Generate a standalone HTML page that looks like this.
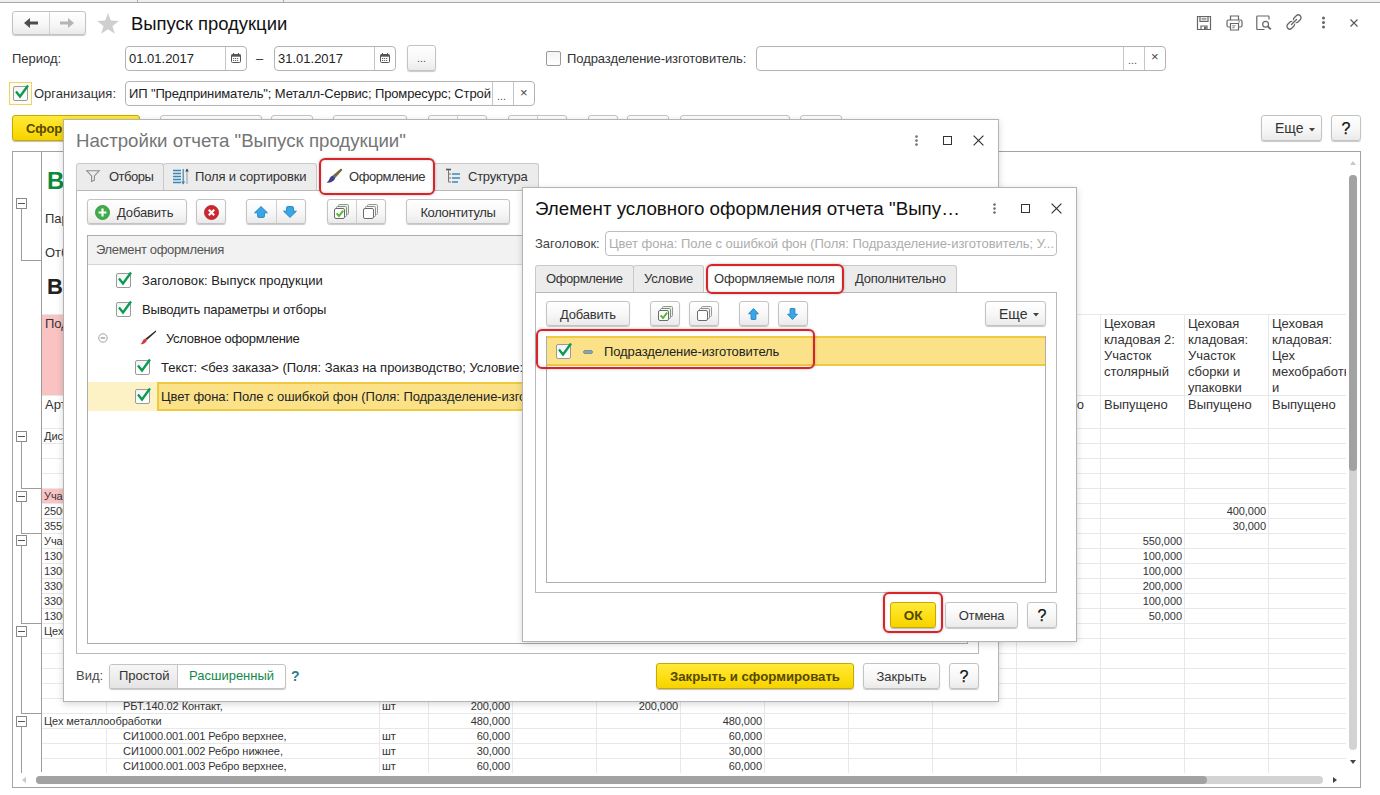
<!DOCTYPE html>
<html lang="ru">
<head>
<meta charset="utf-8">
<title>Выпуск продукции</title>
<style>
*{box-sizing:border-box}
html,body{margin:0;padding:0}
body{width:1380px;height:795px;position:relative;overflow:hidden;background:#fff;font-family:"Liberation Sans",sans-serif;font-size:13px;color:#333}
.a{position:absolute}
.t{position:absolute;white-space:nowrap;line-height:16px}
.btn{position:absolute;border:1px solid #c3c3c3;border-radius:3px;background:linear-gradient(#ffffff,#f6f6f6 60%,#eaeaea);box-shadow:0 1px 1px rgba(0,0,0,.22);text-align:center;white-space:nowrap;color:#333}
.ybtn{position:absolute;border:1px solid #c8a900;border-radius:3px;background:linear-gradient(#ffea3a,#fcdd10 60%,#f5d300);box-shadow:0 1px 1px rgba(0,0,0,.25);text-align:center;white-space:nowrap;color:#554800}
.inp{position:absolute;border:1px solid #b4b4b4;border-radius:4px;background:#fff}
.cb{position:absolute;width:15px;height:15px;border:1px solid #9a9a9a;border-radius:2px;background:linear-gradient(#f4f4f4,#fff)}
.hl{position:absolute;height:1px;background:#d9d9d9}
.vl{position:absolute;width:1px;background:#d9d9d9}
.s{position:absolute;white-space:nowrap;font-size:11px;line-height:15px;color:#333;letter-spacing:-.06px}
.r{text-align:right}
.tab{position:absolute;border:1px solid #c9c9c9;border-bottom:none;border-radius:3px 3px 0 0;background:#ececec;white-space:nowrap}
.red{position:absolute;border:2px solid #d8232a;border-radius:6px;box-shadow:0 0 3px rgba(0,0,0,.28),inset 0 0 3px rgba(0,0,0,.18)}
svg{position:absolute;overflow:visible}
</style>
</head>
<body>
<!-- ===== main window ===== -->
<div id="main">
<div class="a" style="left:0;top:0;width:1380px;height:2px;background:#efefef"></div>
<div class="a" style="left:0;top:2px;width:1380px;height:1px;background:#a8a8a8"></div>
<div class="a" style="left:137px;top:0;width:1px;height:2px;background:#aaa"></div>
<div class="a" style="left:283px;top:0;width:1px;height:2px;background:#aaa"></div>

<!-- nav buttons -->
<div class="btn" style="left:12px;top:11px;width:74px;height:24px"></div>
<div class="a" style="left:49px;top:12px;width:1px;height:22px;background:#d0d0d0"></div>
<svg style="left:23px;top:17px" width="16" height="12" viewBox="0 0 16 12"><path d="M1 6 L7 1 L7 4.6 L15 4.6 L15 7.4 L7 7.4 L7 11 Z" fill="#4d4d4d"/></svg>
<svg style="left:59px;top:17px" width="16" height="12" viewBox="0 0 16 12"><path d="M15 6 L9 1 L9 4.6 L1 4.6 L1 7.4 L9 7.4 L9 11 Z" fill="#b5b5b5"/></svg>
<svg style="left:96px;top:12px" width="24" height="23" viewBox="0 0 24 23"><path d="M12 1 L14.8 8.6 L23 8.9 L16.5 13.9 L18.8 21.8 L12 17.2 L5.2 21.8 L7.5 13.9 L1 8.9 L9.2 8.6 Z" fill="#cfcfcf"/></svg>
<div class="t" style="left:131px;top:13px;font-size:18.45px;line-height:22px;color:#111">Выпуск продукции</div>

<!-- top-right icons -->
<svg style="left:1196px;top:15px" width="16" height="16" viewBox="0 0 16 16" fill="none" stroke="#666" stroke-width="1.2"><path d="M1.5 1.5 H14.5 V14.5 H1.5 Z"/><path d="M4 1.5 V6.5 H12 V1.5"/><path d="M5.5 3.3 H10.5 M5.5 4.9 H10.5" stroke-width=".8"/><path d="M5 14.5 V11 H11 V14.5"/><rect x="8" y="11.6" width="2.4" height="2.6" fill="#666" stroke="none"/></svg>
<svg style="left:1226px;top:15px" width="17" height="16" viewBox="0 0 17 16" fill="none" stroke="#666" stroke-width="1.2"><path d="M4.5 5 V1 H12.5 V5"/><path d="M4 12 H2.5 Q1 12 1 10.5 V6.5 Q1 5 2.5 5 H14.5 Q16 5 16 6.5 V10.5 Q16 12 14.5 12 H13"/><path d="M4.5 8.5 H12.5 V15 H4.5 Z" fill="#fff"/><path d="M6.3 10.8 H9.5 M6.3 12.7 H8.5" stroke-width=".9"/><path d="M12.2 6.9 H14" stroke-width=".9"/></svg>
<svg style="left:1256px;top:15px" width="16" height="16" viewBox="0 0 16 16" fill="none" stroke="#666" stroke-width="1.2"><path d="M8.5 14.5 H1.5 Q.8 14.5 .8 13.8 V1.7 Q.8 1 1.5 1 H12.3 Q13 1 13 1.7 V4.5"/><circle cx="9.6" cy="9.2" r="2.9"/><path d="M11.8 11.4 L14.8 14.4" stroke-width="1.8"/></svg>
<svg style="left:1286px;top:14px" width="16" height="16" viewBox="0 0 16 16" fill="none" stroke="#666" stroke-width="1.3"><g transform="translate(8 8) rotate(-45)"><rect x=".4" y="-2.8" width="8.4" height="5.6" rx="2.8"/><rect x="-8.8" y="-2.8" width="8.4" height="5.6" rx="2.8"/><path d="M-3.4 0 H3.4" stroke="#fff" stroke-width="3.2"/><path d="M-3.6 0 H3.6" stroke-linecap="round"/></g></svg>
<svg style="left:1321px;top:16px" width="5" height="13" viewBox="0 0 5 13"><circle cx="2.5" cy="2" r="1.5" fill="#666"/><circle cx="2.5" cy="6.5" r="1.5" fill="#666"/><circle cx="2.5" cy="11" r="1.5" fill="#666"/></svg>
<svg style="left:1350px;top:19px" width="8" height="8" viewBox="0 0 8 8"><path d="M.5 .5 L7.5 7.5 M7.5 .5 L.5 7.5" stroke="#555" stroke-width="1.1"/></svg>

<!-- period row -->
<div class="t" style="left:12px;top:51px">Период:</div>
<div class="inp" style="left:125px;top:46px;width:122px;height:25px"></div>
<div class="a" style="left:225px;top:47px;width:1px;height:23px;background:#c6c6c6"></div>
<div class="t" style="left:129px;top:51px;color:#222">01.01.2017</div>
<svg class="cal" style="left:231px;top:53px" width="10" height="10" viewBox="0 0 10 10"><rect x=".5" y="1.5" width="9" height="8" rx="1" fill="#fff" stroke="#555"/><rect x=".5" y="1.5" width="9" height="2.2" fill="#555"/><path d="M2.5 0 V2 M7.5 0 V2" stroke="#555"/><path d="M2 5.5 H8 M2 7.5 H8" stroke="#555" stroke-width=".9" stroke-dasharray="1.2 .8"/></svg>
<div class="t" style="left:256px;top:51px">–</div>
<div class="inp" style="left:274px;top:46px;width:122px;height:25px"></div>
<div class="a" style="left:374px;top:47px;width:1px;height:23px;background:#c6c6c6"></div>
<div class="t" style="left:278px;top:51px;color:#222">31.01.2017</div>
<svg class="cal" style="left:380px;top:53px" width="10" height="10" viewBox="0 0 10 10"><rect x=".5" y="1.5" width="9" height="8" rx="1" fill="#fff" stroke="#555"/><rect x=".5" y="1.5" width="9" height="2.2" fill="#555"/><path d="M2.5 0 V2 M7.5 0 V2" stroke="#555"/><path d="M2 5.5 H8 M2 7.5 H8" stroke="#555" stroke-width=".9" stroke-dasharray="1.2 .8"/></svg>
<div class="btn" style="left:407px;top:45px;width:29px;height:26px;line-height:25px;font-size:11px;color:#555">...</div>

<div class="cb" style="left:546px;top:51px"></div>
<div class="t" style="left:567px;top:51px;letter-spacing:-.08px">Подразделение-изготовитель:</div>
<div class="inp" style="left:756px;top:46px;width:410px;height:25px"></div>
<div class="a" style="left:1123px;top:47px;width:1px;height:23px;background:#c6c6c6"></div>
<div class="a" style="left:1144px;top:47px;width:1px;height:23px;background:#c6c6c6"></div>
<div class="t" style="left:1128px;top:52px;font-size:11px;color:#555">...</div>
<div class="t" style="left:1151px;top:49px;font-size:13px;color:#444">×</div>

<!-- organization row -->
<div class="a" style="left:9px;top:82px;width:23px;height:23px;border:1px solid #e9d46a;background:#fffdf0"></div>
<div class="cb" style="left:13px;top:86px"></div>
<svg style="left:14px;top:84px" width="16" height="15" viewBox="0 0 16 15"><path d="M2 7.5 L6 12.5 L14 1.5" fill="none" stroke="#0a9a52" stroke-width="2.3"/></svg>
<div class="t" style="left:34px;top:86px">Организация:</div>
<div class="inp" style="left:125px;top:81px;width:410px;height:25px"></div>
<div class="a" style="left:492px;top:82px;width:1px;height:23px;background:#c6c6c6"></div>
<div class="a" style="left:513px;top:82px;width:1px;height:23px;background:#c6c6c6"></div>
<div class="t" style="left:129px;top:86px;color:#222;width:362px;overflow:hidden;letter-spacing:-.13px">ИП "Предприниматель"; Металл-Сервис; Промресурс; Стройснаб</div>
<div class="t" style="left:497px;top:88px;font-size:11px;color:#555">...</div>
<div class="t" style="left:520px;top:85px;font-size:13px;color:#444">×</div>

<!-- command bar -->
<div class="ybtn" style="left:12px;top:115px;width:128px;height:26px;line-height:25px;font-weight:bold;text-align:left;padding-left:13px">Сформировать</div>
<div class="btn" style="left:160px;top:115px;width:102px;height:26px"></div>
<div class="btn" style="left:271px;top:115px;width:42px;height:26px"></div>
<div class="btn" style="left:333px;top:115px;width:74px;height:26px"></div>
<div class="btn" style="left:428px;top:115px;width:59px;height:26px"></div>
<div class="a" style="left:457px;top:116px;width:1px;height:24px;background:#d0d0d0"></div>
<div class="btn" style="left:508px;top:115px;width:59px;height:26px"></div>
<div class="a" style="left:537px;top:116px;width:1px;height:24px;background:#d0d0d0"></div>
<div class="btn" style="left:588px;top:115px;width:30px;height:26px"></div>
<div class="btn" style="left:627px;top:115px;width:42px;height:26px"></div>
<div class="btn" style="left:680px;top:115px;width:110px;height:26px"></div>
<div class="btn" style="left:800px;top:115px;width:42px;height:26px"></div>
<div class="btn" style="left:1261px;top:115px;width:61px;height:26px;line-height:25px;font-size:14px;text-align:left;padding-left:13px">Еще</div>
<svg style="left:1309px;top:128px" width="6" height="4" viewBox="0 0 6 4"><path d="M0 0 H6 L3 3.6 Z" fill="#444"/></svg>
<div class="btn" style="left:1331px;top:115px;width:30px;height:26px;line-height:25px;font-size:16px;color:#111;-webkit-text-stroke:.25px #111">?</div>
<!-- ===== spreadsheet ===== -->
<div class="a" style="left:12px;top:151px;width:1349px;height:637px;border:1px solid #a3a3a3;background:#fff"></div>
<div class="a" id="sheet" style="left:13px;top:152px;width:1333px;height:621px;overflow:hidden">
<div class="a" style="left:29px;top:163px;width:65px;height:80px;background:#f9c3c3"></div>
<div class="a" style="left:29px;top:336px;width:65px;height:15px;background:#f9c3c3"></div>
<div class="hl" style="left:29px;top:162px;width:1305px;background:#e8e8e8"></div>
<div class="hl" style="left:29px;top:243px;width:1305px;background:#e8e8e8"></div>
<div class="hl" style="left:29px;top:276px;width:1305px;background:#e8e8e8"></div>
<div class="hl" style="left:29px;top:291px;width:1305px;background:#e8e8e8"></div>
<div class="hl" style="left:29px;top:306px;width:1305px;background:#e8e8e8"></div>
<div class="hl" style="left:29px;top:321px;width:1305px;background:#e8e8e8"></div>
<div class="hl" style="left:29px;top:336px;width:1305px;background:#e8e8e8"></div>
<div class="hl" style="left:29px;top:351px;width:1305px;background:#e8e8e8"></div>
<div class="hl" style="left:29px;top:366px;width:1305px;background:#e8e8e8"></div>
<div class="hl" style="left:29px;top:381px;width:1305px;background:#e8e8e8"></div>
<div class="hl" style="left:29px;top:396px;width:1305px;background:#e8e8e8"></div>
<div class="hl" style="left:29px;top:411px;width:1305px;background:#e8e8e8"></div>
<div class="hl" style="left:29px;top:426px;width:1305px;background:#e8e8e8"></div>
<div class="hl" style="left:29px;top:441px;width:1305px;background:#e8e8e8"></div>
<div class="hl" style="left:29px;top:456px;width:1305px;background:#e8e8e8"></div>
<div class="hl" style="left:29px;top:471px;width:1305px;background:#e8e8e8"></div>
<div class="hl" style="left:29px;top:486px;width:1305px;background:#e8e8e8"></div>
<div class="hl" style="left:29px;top:501px;width:1305px;background:#e8e8e8"></div>
<div class="hl" style="left:29px;top:516px;width:1305px;background:#e8e8e8"></div>
<div class="hl" style="left:29px;top:531px;width:1305px;background:#e8e8e8"></div>
<div class="hl" style="left:29px;top:546px;width:1305px;background:#e8e8e8"></div>
<div class="hl" style="left:29px;top:561px;width:1305px;background:#e8e8e8"></div>
<div class="hl" style="left:29px;top:576px;width:1305px;background:#e8e8e8"></div>
<div class="hl" style="left:29px;top:591px;width:1305px;background:#e8e8e8"></div>
<div class="hl" style="left:29px;top:606px;width:1305px;background:#e8e8e8"></div>
<div class="hl" style="left:29px;top:621px;width:1305px;background:#e8e8e8"></div>
<div class="vl" style="left:93px;top:163px;height:460px;background:#e8e8e8"></div>
<div class="vl" style="left:366px;top:163px;height:460px;background:#e8e8e8"></div>
<div class="vl" style="left:415px;top:163px;height:460px;background:#e8e8e8"></div>
<div class="vl" style="left:499px;top:163px;height:460px;background:#e8e8e8"></div>
<div class="vl" style="left:583px;top:163px;height:460px;background:#e8e8e8"></div>
<div class="vl" style="left:667px;top:163px;height:460px;background:#e8e8e8"></div>
<div class="vl" style="left:751px;top:163px;height:460px;background:#e8e8e8"></div>
<div class="vl" style="left:835px;top:163px;height:460px;background:#e8e8e8"></div>
<div class="vl" style="left:919px;top:163px;height:460px;background:#e8e8e8"></div>
<div class="vl" style="left:1003px;top:163px;height:460px;background:#e8e8e8"></div>
<div class="vl" style="left:1087px;top:163px;height:460px;background:#e8e8e8"></div>
<div class="vl" style="left:1171px;top:163px;height:460px;background:#e8e8e8"></div>
<div class="vl" style="left:1255px;top:163px;height:460px;background:#e8e8e8"></div>
<div class="vl" style="left:28px;top:0;height:620px;background:#9c9c9c"></div>
<div class="vl" style="left:8px;top:57px;height:51px;background:#9c9c9c"></div>
<div class="hl" style="left:8px;top:108px;width:20px;background:#9c9c9c"></div>
<div class="a" style="left:3px;top:46px;width:11px;height:11px;border:1px solid #8a8a8a;background:#fff"></div>
<div class="a" style="left:5px;top:51px;width:7px;height:1px;background:#555"></div>
<div class="vl" style="left:8px;top:290px;height:46px;background:#9c9c9c"></div>
<div class="hl" style="left:8px;top:336px;width:20px;background:#9c9c9c"></div>
<div class="a" style="left:3px;top:279px;width:11px;height:11px;border:1px solid #8a8a8a;background:#fff"></div>
<div class="a" style="left:5px;top:284px;width:7px;height:1px;background:#555"></div>
<div class="vl" style="left:8px;top:350px;height:31px;background:#9c9c9c"></div>
<div class="hl" style="left:8px;top:381px;width:20px;background:#9c9c9c"></div>
<div class="a" style="left:3px;top:339px;width:11px;height:11px;border:1px solid #8a8a8a;background:#fff"></div>
<div class="a" style="left:5px;top:344px;width:7px;height:1px;background:#555"></div>
<div class="vl" style="left:8px;top:394px;height:77px;background:#9c9c9c"></div>
<div class="hl" style="left:8px;top:471px;width:20px;background:#9c9c9c"></div>
<div class="a" style="left:3px;top:383px;width:11px;height:11px;border:1px solid #8a8a8a;background:#fff"></div>
<div class="a" style="left:5px;top:388px;width:7px;height:1px;background:#555"></div>
<div class="vl" style="left:8px;top:485px;height:76px;background:#9c9c9c"></div>
<div class="hl" style="left:8px;top:561px;width:20px;background:#9c9c9c"></div>
<div class="a" style="left:3px;top:474px;width:11px;height:11px;border:1px solid #8a8a8a;background:#fff"></div>
<div class="a" style="left:5px;top:479px;width:7px;height:1px;background:#555"></div>
<div class="vl" style="left:8px;top:575px;height:53px;background:#9c9c9c"></div>
<div class="a" style="left:3px;top:564px;width:11px;height:11px;border:1px solid #8a8a8a;background:#fff"></div>
<div class="a" style="left:5px;top:569px;width:7px;height:1px;background:#555"></div>
<div class="t" style="left:34px;top:14px;font-size:24px;line-height:30px;font-weight:bold;color:#0c8a3e">Выпуск продукции</div>
<div class="t" style="left:32px;top:59px">Параметры:</div>
<div class="t" style="left:32px;top:93px">Отбор:</div>
<div class="t" style="left:34px;top:122px;font-size:22px;line-height:26px;font-weight:bold;color:#222">Выпуск</div>
<div class="t" style="left:32px;top:164px">Подразделение</div>
<div class="t" style="left:32px;top:245px">Артикул</div>
<div class="t" style="left:1091px;top:164px;width:80px;height:79px;overflow:hidden">Цеховая<br>кладовая 2:<br>Участок<br>столярный</div>
<div class="t" style="left:1091px;top:245px">Выпущено</div>
<div class="t" style="left:1175px;top:164px;width:80px;height:79px;overflow:hidden">Цеховая<br>кладовая:<br>Участок<br>сборки и<br>упаковки</div>
<div class="t" style="left:1175px;top:245px">Выпущено</div>
<div class="t" style="left:1259px;top:164px;width:80px;height:79px;overflow:hidden">Цеховая<br>кладовая:<br>Цех<br>мехобработки<br>и</div>
<div class="t" style="left:1259px;top:245px">Выпущено</div>
<div class="t r" style="left:1007px;top:245px;width:64px">Выпущено</div>
<div class="s" style="left:31px;top:277px">Диспетчерская</div>
<div class="s" style="left:31px;top:337px">Участок</div>
<div class="s" style="left:31px;top:352px">2500</div>
<div class="s" style="left:31px;top:367px">3550</div>
<div class="s" style="left:31px;top:382px">Участок</div>
<div class="s" style="left:31px;top:397px">1300</div>
<div class="s" style="left:31px;top:412px">1300</div>
<div class="s" style="left:31px;top:427px">3300</div>
<div class="s" style="left:31px;top:442px">3300</div>
<div class="s" style="left:31px;top:457px">1300</div>
<div class="s" style="left:31px;top:472px">Цех</div>
<div class="s r" style="left:1183px;top:352px;width:70px">400,000</div>
<div class="s r" style="left:1183px;top:367px;width:70px">30,000</div>
<div class="s r" style="left:1099px;top:382px;width:70px">550,000</div>
<div class="s r" style="left:1099px;top:397px;width:70px">100,000</div>
<div class="s r" style="left:1099px;top:412px;width:70px">100,000</div>
<div class="s r" style="left:1099px;top:427px;width:70px">200,000</div>
<div class="s r" style="left:1099px;top:442px;width:70px">100,000</div>
<div class="s r" style="left:1099px;top:457px;width:70px">50,000</div>
<div class="s" style="left:110px;top:547px">РБТ.140.02 Контакт,</div>
<div class="s" style="left:369px;top:547px">шт</div>
<div class="s r" style="left:427px;top:547px;width:70px">200,000</div>
<div class="s r" style="left:595px;top:547px;width:70px">200,000</div>
<div class="a" style="left:93px;top:562px;width:1px;height:14px;background:#fff"></div>
<div class="s" style="left:31px;top:562px">Цех металлообработки</div>
<div class="s r" style="left:427px;top:562px;width:70px">480,000</div>
<div class="s r" style="left:679px;top:562px;width:70px">480,000</div>
<div class="s" style="left:110px;top:577px">СИ1000.001.001 Ребро верхнее,</div>
<div class="s" style="left:369px;top:577px">шт</div>
<div class="s r" style="left:427px;top:577px;width:70px">60,000</div>
<div class="s r" style="left:679px;top:577px;width:70px">60,000</div>
<div class="s" style="left:110px;top:592px">СИ1000.001.002 Ребро нижнее,</div>
<div class="s" style="left:369px;top:592px">шт</div>
<div class="s r" style="left:427px;top:592px;width:70px">30,000</div>
<div class="s r" style="left:679px;top:592px;width:70px">30,000</div>
<div class="s" style="left:110px;top:607px">СИ1000.001.003 Ребро верхнее,</div>
<div class="s" style="left:369px;top:607px">шт</div>
<div class="s r" style="left:427px;top:607px;width:70px">60,000</div>
<div class="s r" style="left:679px;top:607px;width:70px">60,000</div>
</div>
<div class="a" style="left:1349px;top:175px;width:8px;height:575px;border-radius:4px;background:#d3d3d3"></div>
<div class="a" style="left:1349px;top:175px;width:8px;height:296px;border-radius:4px;background:#a2a2a2"></div>
<svg style="left:1350px;top:161px" width="6" height="4" viewBox="0 0 6 4"><path d="M0 4 H6 L3 0 Z" fill="#c8c8c8"/></svg>
<svg style="left:1350px;top:760px" width="6" height="4" viewBox="0 0 6 4"><path d="M0 0 H6 L3 4 Z" fill="#444"/></svg>
<div class="a" style="left:36px;top:776px;width:1287px;height:8px;border-radius:4px;background:#d3d3d3"></div>
<div class="a" style="left:36px;top:776px;width:1171px;height:8px;border-radius:4px;background:#a2a2a2"></div>
<svg style="left:22px;top:777px" width="4" height="6" viewBox="0 0 4 6"><path d="M4 0 V6 L0 3 Z" fill="#c8c8c8"/></svg>
<svg style="left:1333px;top:777px" width="4" height="6" viewBox="0 0 4 6"><path d="M0 0 V6 L4 3 Z" fill="#444"/></svg>
<!-- ===== end spreadsheet ===== -->
</div>
<!-- ===== dialog 1 ===== -->
<div class="a" id="d1" style="left:63px;top:119px;width:936px;height:583px;background:#fff;border:1px solid #b4b4b4;box-shadow:0 2px 7px rgba(0,0,0,.16)"></div>
<div class="t" style="left:76px;top:130px;font-size:18.67px;line-height:22px;color:#757575">Настройки отчета "Выпуск продукции"</div>
<svg style="left:914px;top:135px" width="5" height="12" viewBox="0 0 5 12"><circle cx="2.5" cy="1.6" r="1.35" fill="#777"/><circle cx="2.5" cy="5.6" r="1.35" fill="#777"/><circle cx="2.5" cy="9.6" r="1.35" fill="#777"/></svg>
<div class="a" style="left:943px;top:136px;width:9px;height:9px;border:1.5px solid #333"></div>
<svg style="left:973px;top:135px" width="11" height="11" viewBox="0 0 11 11"><path d="M.6 .6 L10.4 10.4 M10.4 .6 L.6 10.4" stroke="#333" stroke-width="1.2"/></svg>

<!-- tabs -->
<div class="tab" style="left:76px;top:163px;width:88px;height:28px"></div>
<div class="tab" style="left:163px;top:163px;width:154px;height:28px"></div>
<div class="tab" style="left:432px;top:163px;width:107px;height:28px"></div>
<!-- panel -->
<div class="a" style="left:76px;top:190px;width:903px;height:464px;border:1px solid #b9b9b9;background:#fff"></div>
<!-- active tab -->
<div class="a" style="left:321px;top:160px;width:112px;height:31px;background:#fff"></div>
<div class="red" style="left:319px;top:158px;width:116px;height:37px"></div>
<svg style="left:86px;top:170px" width="14" height="12" viewBox="0 0 14 12" fill="none" stroke="#8a8a8a" stroke-width="1.1"><path d="M.8 .8 H13.2 L8.4 6 V10.2 L5.6 11.4 V6 Z"/></svg>
<div class="t" style="left:109px;top:169px;letter-spacing:-.5px">Отборы</div>
<svg style="left:172px;top:168px" width="17" height="17" viewBox="0 0 17 17" fill="none"><path d="M1 2.5 H9 M1 5.5 H9 M1 8.5 H9 M1 11.5 H9 M1 14.5 H9" stroke="#3b88b8" stroke-width="1.7"/><path d="M11.2 1 V16" stroke="#3b88b8" stroke-width="1.2"/><path d="M11.2 16.5 L9.2 13.5 H13.2 Z" fill="#3b88b8"/><path d="M15 1.5 V16" stroke="#444" stroke-width="1" stroke-dasharray="1 1"/><path d="M15 .5 L13.2 3.6 H16.8 Z" fill="#444"/></svg>
<div class="t" style="left:195px;top:169px;letter-spacing:-.14px">Поля и сортировки</div>
<svg style="left:326px;top:168px" width="17" height="16" viewBox="0 0 17 16"><path d="M14.6 .8 Q16.4 .4 16.2 2.2 L9.4 9.8 L6.8 7.4 Z" fill="#7a6b3c"/><path d="M6.8 7.4 L9.4 9.8 Q8.6 12.6 6 13.8 Q3.4 15 .6 14.6 Q2.8 13.2 3.4 11 Q4.2 8.2 6.8 7.4 Z" fill="#3f3f8f"/></svg>
<div class="t" style="left:349px;top:169px;letter-spacing:-.46px">Оформление</div>
<svg style="left:445px;top:168px" width="17" height="17" viewBox="0 0 17 17" fill="none"><path d="M1 1.5 H6" stroke="#555" stroke-width="1.6"/><path d="M3.5 2 V14 H6 M3.5 6 H6 M3.5 10 H6" stroke="#777" stroke-width="1"/><path d="M7 6 H15 M7 10 H15 M7 14 H13" stroke="#3b88b8" stroke-width="1.7"/></svg>
<div class="t" style="left:468px;top:169px;letter-spacing:-.25px">Структура</div>

<!-- toolbar -->
<div class="btn" style="left:87px;top:199px;width:100px;height:25px"></div>
<svg style="left:95px;top:205px" width="15" height="15" viewBox="0 0 15 15"><circle cx="7.5" cy="7.5" r="7" fill="#3fae49" stroke="#2b8a35" stroke-width=".8"/><path d="M7.5 3.6 V11.4 M3.6 7.5 H11.4" stroke="#fff" stroke-width="2.2"/></svg>
<div class="t" style="left:117px;top:205px;letter-spacing:-.15px">Добавить</div>
<div class="btn" style="left:196px;top:199px;width:30px;height:25px"></div>
<svg style="left:204px;top:205px" width="15" height="15" viewBox="0 0 15 15"><circle cx="7.5" cy="7.5" r="7" fill="#d02630" stroke="#a81820" stroke-width=".8"/><path d="M4.8 4.8 L10.2 10.2 M10.2 4.8 L4.8 10.2" stroke="#fff" stroke-width="2.2"/></svg>
<div class="btn" style="left:246px;top:199px;width:60px;height:25px"></div>
<div class="a" style="left:276px;top:200px;width:1px;height:23px;background:#cfcfcf"></div>
<svg style="left:254px;top:206px" width="14" height="12" viewBox="0 0 14 12"><path d="M7 .6 L13.4 6.8 H10.4 V10.4 Q10.4 11.4 9.4 11.4 H4.6 Q3.6 11.4 3.6 10.4 V6.8 H.6 Z" fill="#3ba6e6" stroke="#2587c7" stroke-width="1" stroke-linejoin="round"/></svg>
<svg style="left:283px;top:206px" width="14" height="12" viewBox="0 0 14 12"><path d="M7 11.4 L13.4 5.2 H10.4 V1.6 Q10.4 .6 9.4 .6 H4.6 Q3.6 .6 3.6 1.6 V5.2 H.6 Z" fill="#3ba6e6" stroke="#2587c7" stroke-width="1" stroke-linejoin="round"/></svg>
<div class="btn" style="left:327px;top:199px;width:59px;height:25px"></div>
<div class="a" style="left:356px;top:200px;width:1px;height:23px;background:#cfcfcf"></div>
<svg style="left:334px;top:204px" width="15" height="15" viewBox="0 0 15 15"><rect x="4.5" y=".5" width="10" height="10" rx="1" fill="#e8f0e8" stroke="#8a9a8c"/><rect x="2.5" y="2.5" width="10" height="10" rx="1" fill="#eef4ee" stroke="#7f8f82"/><rect x=".5" y="4.5" width="10" height="10" rx="1.5" fill="#fff" stroke="#6a6a6a"/><path d="M2.6 9.4 L5 12 L9.2 6.6" fill="none" stroke="#5cb531" stroke-width="2"/></svg>
<svg style="left:363px;top:204px" width="15" height="15" viewBox="0 0 15 15"><rect x="4.5" y=".5" width="10" height="10" rx="1" fill="#f4f4f4" stroke="#9a9a9a"/><rect x="2.5" y="2.5" width="10" height="10" rx="1" fill="#f8f8f8" stroke="#8c8c8c"/><rect x=".5" y="4.5" width="10" height="10" rx="1.5" fill="#fff" stroke="#6a6a6a"/></svg>
<div class="btn" style="left:406px;top:199px;width:104px;height:25px;line-height:25px;letter-spacing:-.36px">Колонтитулы</div>

<!-- list -->
<div class="a" style="left:87px;top:235px;width:881px;height:409px;border:1px solid #adadad;background:#fff"></div>
<div class="a" style="left:88px;top:236px;width:879px;height:29px;background:#f2f2f2;border-bottom:1px solid #d5d5d5"></div>
<div class="t" style="left:96px;top:242px;color:#555;letter-spacing:-.35px">Элемент оформления</div>
<div class="a" style="left:88px;top:382px;width:879px;height:29px;background:#fdf1c6"></div>
<div class="a" style="left:157px;top:382px;width:811px;height:29px;background:#fbe288;border:2px solid #efc940"></div>

<div class="cb" style="left:116px;top:273px"></div>
<svg style="left:117px;top:271px" width="16" height="15" viewBox="0 0 16 15"><path d="M2 7.5 L6 12.5 L14 1.5" fill="none" stroke="#0a9a52" stroke-width="2.3"/></svg>
<div class="t" style="left:142px;top:273px;color:#222;letter-spacing:.09px">Заголовок: Выпуск продукции</div>
<div class="cb" style="left:116px;top:302px"></div>
<svg style="left:117px;top:300px" width="16" height="15" viewBox="0 0 16 15"><path d="M2 7.5 L6 12.5 L14 1.5" fill="none" stroke="#0a9a52" stroke-width="2.3"/></svg>
<div class="t" style="left:142px;top:302px;color:#222;letter-spacing:-.16px">Выводить параметры и отборы</div>
<svg style="left:98px;top:333px" width="10" height="10" viewBox="0 0 10 10"><circle cx="5" cy="5" r="4.2" fill="#fff" stroke="#a2a2a2"/><path d="M2.8 5 H7.2" stroke="#777"/></svg>
<svg style="left:140px;top:330px" width="17" height="16" viewBox="0 0 17 16"><path d="M15.6 .6 Q16.6 1 15.8 2 L7 10 L5.6 8.6 Z" fill="#3a2a20"/><path d="M5.6 8.6 L7 10 Q6.4 12.6 4.2 13.6 Q2.2 14.6 .4 14 Q2 13 2.4 11.4 Q3 9 5.6 8.6 Z" fill="#d83a3a"/></svg>
<div class="t" style="left:166px;top:331px;color:#222;letter-spacing:-.28px">Условное оформление</div>
<div class="cb" style="left:135px;top:360px"></div>
<svg style="left:136px;top:358px" width="16" height="15" viewBox="0 0 16 15"><path d="M2 7.5 L6 12.5 L14 1.5" fill="none" stroke="#0a9a52" stroke-width="2.3"/></svg>
<div class="t" style="left:161px;top:360px;color:#222;letter-spacing:-.03px">Текст: &lt;без заказа&gt; (Поля: Заказ на производство; Условие: Заказ на производство Не заполнено)</div>
<div class="cb" style="left:135px;top:389px"></div>
<svg style="left:136px;top:387px" width="16" height="15" viewBox="0 0 16 15"><path d="M2 7.5 L6 12.5 L14 1.5" fill="none" stroke="#0a9a52" stroke-width="2.3"/></svg>
<div class="t" style="left:161px;top:389px;color:#222;letter-spacing:-.06px">Цвет фона: Поле с ошибкой фон (Поля: Подразделение-изготовитель; Условие: Подразделение-изготовитель)</div>

<!-- bottom bar -->
<div class="t" style="left:76px;top:668px;color:#4a4a4a">Вид:</div>
<div class="btn" style="left:109px;top:664px;width:177px;height:25px;background:#fff"></div>
<div class="a" style="left:110px;top:665px;width:68px;height:23px;border-radius:2px 0 0 2px;background:linear-gradient(#f7f7f7,#e4e4e4);border-right:1px solid #c6c6c6"></div>
<div class="t" style="left:119px;top:668px">Простой</div>
<div class="t" style="left:189px;top:668px;color:#128a4a">Расширенный</div>
<div class="t" style="left:291px;top:668px;font-size:14px;font-weight:bold;color:#2b7f8c">?</div>
<div class="ybtn" style="left:656px;top:663px;width:198px;height:26px;line-height:25px;font-weight:bold;font-size:13.2px">Закрыть и сформировать</div>
<div class="btn" style="left:863px;top:663px;width:77px;height:26px;line-height:25px">Закрыть</div>
<div class="btn" style="left:949px;top:663px;width:30px;height:26px;line-height:26px;font-size:16px;color:#111;-webkit-text-stroke:.25px #111">?</div>
<!-- ===== end dialog 1 ===== -->
<!-- ===== dialog 2 ===== -->
<div class="a" id="d2" style="left:522px;top:187px;width:555px;height:455px;background:#fff;border:1px solid #b4b4b4;box-shadow:0 2px 7px rgba(0,0,0,.16)"></div>
<div class="t" style="left:535px;top:198px;font-size:18.75px;line-height:22px;color:#111">Элемент условного оформления отчета "Выпу…</div>
<svg style="left:992px;top:203px" width="5" height="12" viewBox="0 0 5 12"><circle cx="2.5" cy="1.6" r="1.35" fill="#777"/><circle cx="2.5" cy="5.6" r="1.35" fill="#777"/><circle cx="2.5" cy="9.6" r="1.35" fill="#777"/></svg>
<div class="a" style="left:1021px;top:204px;width:9px;height:9px;border:1.5px solid #333"></div>
<svg style="left:1051px;top:203px" width="11" height="11" viewBox="0 0 11 11"><path d="M.6 .6 L10.4 10.4 M10.4 .6 L.6 10.4" stroke="#333" stroke-width="1.2"/></svg>

<div class="t" style="left:535px;top:236px;color:#444">Заголовок:</div>
<div class="inp" style="left:605px;top:231px;width:452px;height:25px;border-color:#bdbdbd"></div>
<div class="t" style="left:609px;top:236px;color:#adadad;letter-spacing:-.03px">Цвет фона: Поле с ошибкой фон (Поля: Подразделение-изготовитель; У...</div>

<!-- tabs -->
<div class="tab" style="left:535px;top:265px;width:99px;height:28px"></div>
<div class="tab" style="left:633px;top:265px;width:71px;height:28px"></div>
<div class="tab" style="left:841px;top:265px;width:116px;height:28px"></div>
<div class="a" style="left:535px;top:292px;width:522px;height:301px;border:1px solid #b9b9b9;background:#fff"></div>
<div class="a" style="left:708px;top:266px;width:134px;height:27px;background:#fff"></div>
<div class="red" style="left:706px;top:264px;width:138px;height:30px"></div>
<div class="t" style="left:546px;top:271px;letter-spacing:-.4px">Оформление</div>
<div class="t" style="left:644px;top:271px;letter-spacing:-.15px">Условие</div>
<div class="t" style="left:714px;top:271px;letter-spacing:-.2px">Оформляемые поля</div>
<div class="t" style="left:855px;top:271px;letter-spacing:-.22px">Дополнительно</div>

<!-- toolbar -->
<div class="btn" style="left:546px;top:301px;width:84px;height:25px;line-height:25px;letter-spacing:-.2px">Добавить</div>
<div class="btn" style="left:650px;top:301px;width:30px;height:25px"></div>
<svg style="left:658px;top:306px" width="15" height="15" viewBox="0 0 15 15"><rect x="4.5" y=".5" width="10" height="10" rx="1" fill="#e8f0e8" stroke="#8a9a8c"/><rect x="2.5" y="2.5" width="10" height="10" rx="1" fill="#eef4ee" stroke="#7f8f82"/><rect x=".5" y="4.5" width="10" height="10" rx="1.5" fill="#fff" stroke="#6a6a6a"/><path d="M2.6 9.4 L5 12 L9.2 6.6" fill="none" stroke="#5cb531" stroke-width="2"/></svg>
<div class="btn" style="left:689px;top:301px;width:30px;height:25px"></div>
<svg style="left:697px;top:306px" width="15" height="15" viewBox="0 0 15 15"><rect x="4.5" y=".5" width="10" height="10" rx="1" fill="#f4f4f4" stroke="#9a9a9a"/><rect x="2.5" y="2.5" width="10" height="10" rx="1" fill="#f8f8f8" stroke="#8c8c8c"/><rect x=".5" y="4.5" width="10" height="10" rx="1.5" fill="#fff" stroke="#6a6a6a"/></svg>
<div class="btn" style="left:739px;top:301px;width:30px;height:25px"></div>
<svg style="left:748px;top:308px" width="11" height="12" viewBox="0 0 11 12"><path d="M5.5 .6 L10.4 5.8 H7.9 V11 Q7.9 11.4 7.5 11.4 H3.5 Q3.1 11.4 3.1 11 V5.8 H.6 Z" fill="#3ba6e6" stroke="#2587c7" stroke-width="1" stroke-linejoin="round"/></svg>
<div class="btn" style="left:778px;top:301px;width:30px;height:25px"></div>
<svg style="left:787px;top:308px" width="11" height="12" viewBox="0 0 11 12"><path d="M5.5 11.4 L10.4 6.2 H7.9 V1 Q7.9 .6 7.5 .6 H3.5 Q3.1 .6 3.1 1 V6.2 H.6 Z" fill="#3ba6e6" stroke="#2587c7" stroke-width="1" stroke-linejoin="round"/></svg>
<div class="btn" style="left:985px;top:301px;width:61px;height:25px;line-height:25px;font-size:14px;text-align:left;padding-left:13px">Еще</div>
<svg style="left:1033px;top:313px" width="6" height="4" viewBox="0 0 6 4"><path d="M0 0 H6 L3 3.6 Z" fill="#444"/></svg>

<!-- list -->
<div class="a" style="left:546px;top:336px;width:500px;height:247px;border:1px solid #adadad;background:#fff"></div>
<div class="a" style="left:547px;top:336px;width:498px;height:30px;background:#fbe288;border-top:2px solid #efc940;border-bottom:2px solid #efc940"></div>
<div class="cb" style="left:556px;top:344px"></div>
<svg style="left:557px;top:342px" width="16" height="15" viewBox="0 0 16 15"><path d="M2 7.5 L6 12.5 L14 1.5" fill="none" stroke="#0a9a52" stroke-width="2.3"/></svg>
<div class="a" style="left:583px;top:350px;width:10px;height:4px;border-radius:2px;background:#8ea3b1;border:1px solid #7b909e"></div>
<div class="t" style="left:604px;top:344px;color:#222;letter-spacing:-.1px">Подразделение-изготовитель</div>
<div class="red" style="left:536px;top:329px;width:279px;height:40px"></div>

<!-- buttons -->
<div class="ybtn" style="left:890px;top:602px;width:46px;height:26px;line-height:25px;font-weight:bold;font-size:13.5px">ОК</div>
<div class="red" style="left:883px;top:592px;width:60px;height:41px"></div>
<div class="btn" style="left:945px;top:602px;width:73px;height:26px;line-height:25px;letter-spacing:-.15px">Отмена</div>
<div class="btn" style="left:1027px;top:602px;width:30px;height:26px;line-height:26px;font-size:16px;color:#111;-webkit-text-stroke:.25px #111">?</div>
<!-- ===== end dialog 2 ===== -->
</body>
</html>
